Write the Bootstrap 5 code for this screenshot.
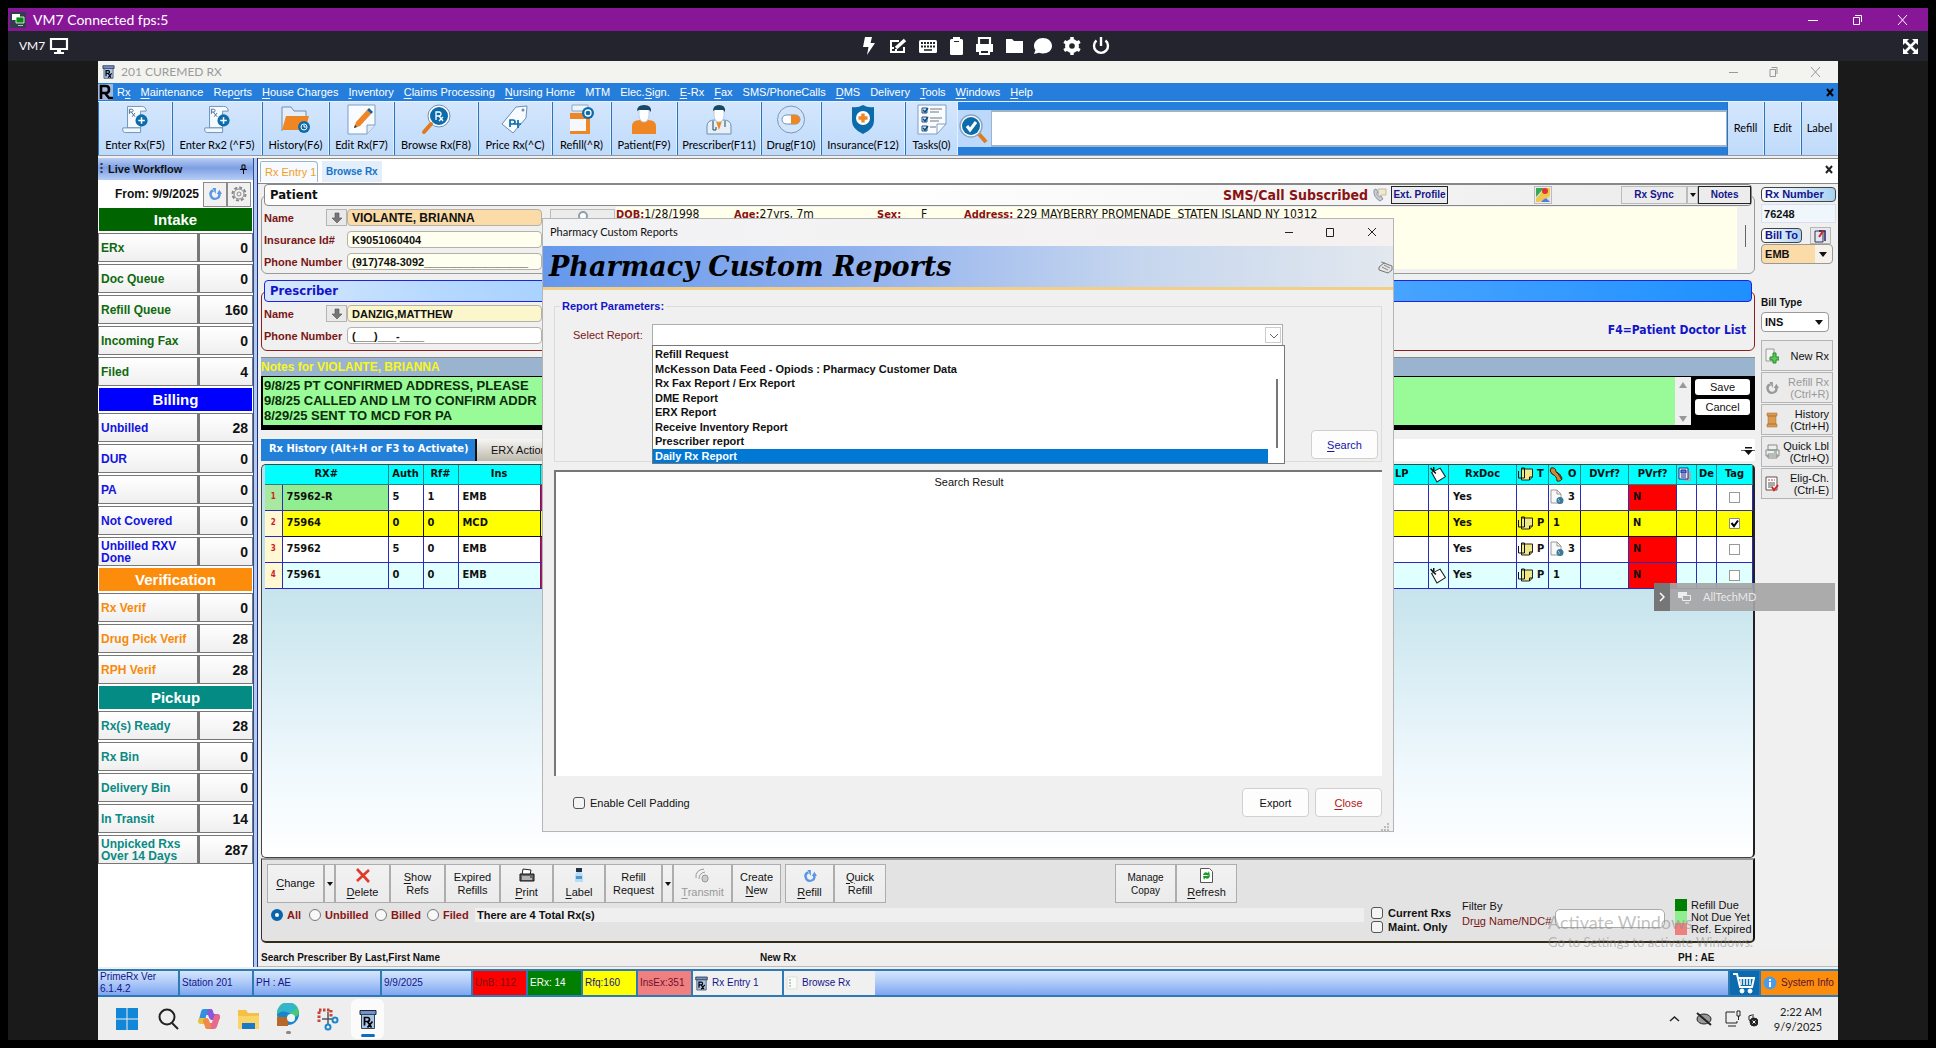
<!DOCTYPE html>
<html lang="en">
<head>
<meta charset="utf-8">
<meta name="viewport" content="width=device-width, initial-scale=1">
<title>VM7 Connected fps:5</title>
<link href="https://cdn.jsdelivr.net/npm/bootstrap@5.3.0/dist/css/bootstrap.min.css" rel="stylesheet">
<style>
:root{--ui:"Liberation Sans",Arial,sans-serif;--tah:"DejaVu Sans Condensed","DejaVu Sans",sans-serif;--seg:"Lato","Open Sans",sans-serif}
body{background:#000;padding:8px;min-height:100vh;display:flex;flex-direction:column;font:12px/14px var(--ui);color:#111;overflow-x:hidden}
button,input,select{font:inherit;color:inherit}
button{border:0;background:none;padding:0}
a{color:inherit;text-decoration:none}
a u,button u{text-underline-offset:2px}
svg{display:block;flex:none}
.shrink-ok{min-width:0}
.titlebar{height:23px;background:#881798;color:#fff;font:14px/20px var(--seg);padding:0 20px 0 2px}
.titlebar span{margin-left:7px}
.vmbar{height:30px;background:#24242f;color:#fff;font:12px/16px var(--seg);padding:0 9px 0 11px}
.vm-tools{padding-left:3px}
.stage{background:#1a1a1a;padding:0 90px}
.desktop{position:relative;background:#f0f0f0}
.app-title{height:22px;background:#f3f4f0;color:#9a9a9a;font:12px/20px var(--seg);padding:0 17px 0 3px}
.app-title span{margin-left:5px}
.menubar{height:19px;background:#257edb;color:#fff;font-size:11px;padding-right:4px;border-bottom:1px solid #e8f3ff}
.menubar nav{gap:10px}
.tools{height:54px;background:#257edb;border-bottom:1px solid #8f9aa6}
.tool{background:linear-gradient(#d4e6fd,#bfdbfb);border-left:1px solid #2b73bd;border-right:1px solid #e3f0ff;height:53px;padding:2px 0 3px;font:11px/14px var(--seg);display:flex;flex-direction:column;align-items:center;justify-content:space-between;color:#000;white-space:nowrap;overflow:hidden}
.w37{width:37px}.w49{width:49px}.w52{width:52px}.w53{width:53px}.w55{width:55px}.w57{width:57px}.w59{width:59px}.w60{width:60px}.w61{width:61px}.w65{width:65px}.w66{width:66px}.w67{width:67px}.w72{width:72px}.w74{width:74px}.w75{width:75px}.w84{width:84px}.w90{width:90px}
.find-ic{width:33px;height:37px;background:#bcd8fa}
.find-box{height:37px;border:2px solid #9fb4c8;border-width:2px 1px;background:#fff;border-radius:0}
.workspace{padding-top:2px}
/* workflow panel */
.flow{width:155px;flex:none;background:#fff}
.flow-head{height:22px;background:linear-gradient(#b9cdf3,#7d9fe4 45%,#b7cdf6);font-size:11px;font-weight:700;padding:0 6px 0 2px}
.flow-head span{margin-left:4px}
.flow-date{height:28px;font-weight:700;background:#fff;white-space:nowrap;padding-right:2px}
.sq{width:24px;height:25px;background:#f1f1f1;border:1px solid #8b8b8b;display:flex;align-items:center;justify-content:center}
.flow h2{font:bold 15px/23px var(--ui);color:#fff;height:23px;margin:0 1px 2px;text-align:center}
.flow .h-in{background:#006400}.flow .h-bi{background:#00f}.flow .h-ve{background:#fb8c0c}.flow .h-pi{background:#048b84}
.flow table{border-collapse:separate;border-spacing:0;width:100%}
.flow td{height:31px;padding:0 0 2px}
.flow td>a,.flow td>b{display:flex;align-items:center;height:29px;border:1px solid #777;background:linear-gradient(#fff,#efefef);line-height:12px;font-weight:700;padding:0 2px;white-space:nowrap}
.flow td>b{border-left-width:2px;justify-content:flex-end;font-size:14px;color:#111;padding-right:4px}
.flow td:last-child{width:55px}
.g{color:#0f6a0f}.bl{color:#1414e0}.or{color:#f88a0b}.te{color:#0b8a84}
.blue-ic{color:#5b96e8}
.split{width:5px;flex:none;background:linear-gradient(90deg,#2a4a9a 1px,#b4c9ee 1px 4px,#1b2f86 4px)}
/* document area */
.tabs{height:26px;background:#fff;border-top:1px solid #888;border-bottom:1px solid #888;font-size:11px;padding:2px 5px 0 2px}
.tabs a{height:21px;line-height:21px;padding:0 4px}
.tab-on{color:#f0a020;background:#f7faff;border:1px solid #9ab4cc;border-bottom:0;border-radius:2px 4px 0 0;width:58px}
.tab-off{color:#1672c8;background:#e2eefa;font-weight:700;font-size:10px}
.doc{padding-left:3px}
.grp-head{position:relative;z-index:1;height:22px;margin:0 3px;border:1px solid #888;border-radius:4px;background:linear-gradient(90deg,#fff,#fff 40%,#ebebeb);font:bold 13px/20px var(--tah);padding-left:5px}
.grp-body{height:79px;margin-top:-11px;border:1px solid #9a9a9a;border-radius:6px;padding:13px 0 0 2px}
.presc{margin-top:6px}
.presc .grp-body{height:60px;border-color:#8a2020}
.head-blue{border-color:#2222dd;background:linear-gradient(90deg,#d6e8fd,#b5d8ff 12%,#1e90ff);color:#1414c8}
.doclist{font:bold 12px/14px var(--tah);color:#1414c8;padding-top:4px}
.sms{color:#8a1212;font-size:14px}
.lab{width:62px;font-weight:700;font-size:11px;color:#7a1616;white-space:nowrap}
.lab-w{width:83px}
.arr{width:21px;height:17px;background:#e9e9e9;border:1px solid #b5b5b5;display:flex;align-items:center;justify-content:center}
.fld{height:17px;border:1px solid #b5b0a8;border-radius:4px;background:#ffffef;font-weight:700;font-size:11px;padding:0 4px;min-width:0}
.fld-pt{background:#fbdca8;font-size:12px}.fld-dr{background:#fcf6cc}
.pform{width:278px;flex:none;gap:5px}
.photo{width:65px;height:40px;margin-right:1px}
.info{background:#ffffec;font:12px/14px var(--tah);height:62px;margin-top:-2px;white-space:nowrap;min-width:0}
.info b{color:#8a1212;font-size:11px}
.i1{width:118px}.i2{width:143px}.i3{width:44px}.i4{width:43px}
.vscroll{width:17px}.vscroll span{width:1px;height:22px;background:#666}
.tbtn{height:18px;background:#ececec;border:1px solid #bbb;font:bold 10px/14px var(--ui);color:#14148c;white-space:nowrap}
.gap-ext{margin-right:86px}.gap-map{margin-right:69px}
.notes{margin-top:6px}
.notes-cap{height:19px;background:#9ab3cf;color:#f7f71c;font-weight:700;font-size:12px;line-height:18px;border-top:1px solid #888}
.notes-body{background:#000;height:54px;padding:1px 5px 0 2px}
.notes-txt{background:#98fb98;height:48px;font:bold 13px/15px var(--ui);color:#0b2b0b;padding:1px}
.nbtns{gap:4px;padding-top:2px}
.nbtn{height:16px;width:55px;background:#fff;border-radius:3px;font-size:11px;line-height:16px}
.grid-tabs{height:22px;margin-top:9px;font-size:11px;background:#fff;white-space:nowrap}
.gt-on{background:#2280d9;color:#fff;font:bold 11px/18px var(--tah);border-right:2px solid #111;width:216px;padding:0 0 3px 8px;text-align:left}
.gt-off{background:linear-gradient(#f6f6f4,#bdb9ad);width:120px;padding-left:14px;text-align:left}
.gridbox{margin-top:3px;padding-left:3px;border:1px solid #444;border-right:2px solid #222;border-radius:5px;background:linear-gradient(#b9dfe8,#c9e5ee 35%,#f0f9fd 78%,#fff)}
.rxt{width:100%;table-layout:fixed;border-collapse:collapse;font:bold 11px/14px var(--tah)}
.c17{width:17px}.c20{width:20px}.c32{width:32px}.c35{width:35px}.c36{width:36px}.c48{width:48px}.c50{width:50px}.c68{width:68px}.c82{width:82px}.c106{width:106px}.c8{width:8px}
.rxt th{background:#0ff;height:19px;text-align:center;border-right:1px solid #2a8080;border-bottom:1px solid #2a8080;padding:0}
.rxt td{height:26px;border:1px solid #2a2ac0;border-top:0;border-left:0;padding:0 0 0 4px;background:#fff;overflow:hidden;white-space:nowrap}
.rxt td.n{font-size:8px;color:#c22;text-align:center;padding:0;background:#fff8d2}
.rxt td.n1{background:#a8e8a0}
.rxt .y td:not(.n){background:#ff0;border-color:#111}
.rxt .c td:not(.n){background:#e0ffff}
.rxt tr td.r{background:#f00!important}
.rxt tr td.gr{background:#90ee90}
.rxt td.t{text-align:center;padding:0}
.ic{display:flex;align-items:center;gap:3px}
.ck{appearance:none;width:11px;height:11px;border:1px solid #999;background:#fff;margin:0 auto;display:block}
.act{background:#e3e3e3;border-top:2px solid #999;border-right:2px solid #111;border-bottom:2px solid #332d1c;border-left:1px solid #333;border-radius:0 0 5px 5px;height:85px;padding:4px 0 0 5px}
.ab{height:39px;background:linear-gradient(#f2f2f2,#ebebeb);border:1px solid #adadad;font-size:11px;line-height:13px;display:flex;flex-direction:column;align-items:center;justify-content:center;gap:3px;color:#111}
.ab:disabled,.sbtn:disabled{color:#999}
.copay{margin-left:229px;font-size:10px}
.dr{width:11px;padding:0}
.rad{appearance:none;width:12px;height:12px;border:1px solid #777;border-radius:50%;background:#f8f8f8;margin:0}
.rad:checked{border:4px solid #0a64ad;background:#fff}
.radios{height:18px;margin-top:3px}
.mar{color:#8a1616;font-weight:700;font-size:11px;margin-left:4px}
.m22{width:22px}.m50{width:50px}.m36{width:36px}.m32{width:32px}
.total{background:#efefef;font-size:11px;padding-left:2px}
.checks{width:98px;padding:3px 0 0 7px;font-size:11px}
.checks label{display:flex;align-items:center;height:14px;gap:5px;font-weight:700;white-space:nowrap}
.cbx{appearance:none;width:12px;height:12px;border:1px solid #555;border-radius:3px;background:#f4f4f4;margin:0}
.filt{width:93px;font-size:11px;line-height:15px;margin-top:-4px;white-space:nowrap}
.filt span,.selrep{color:#7a1616}
.ndc{width:110px;height:19px;margin-top:6px;border:1px solid #aaa;border-radius:5px;background:#fff}
.legend{margin:-4px 0 0 10px;width:78px;font-size:11px;line-height:12px;white-space:nowrap}
.legend i{width:12px;height:36px;background:linear-gradient(green 12px,#90ee90 12px 24px,#f08080 24px)}
.side{width:83px;flex:none;padding:3px 4px 0 6px}
.pill{border:1px solid #444;border-radius:4px;background:linear-gradient(90deg,#fff,#a9d2f2);color:#14148c;font:bold 11px/13px var(--ui);height:15px;padding:0 3px}
.rxnum{height:19px;border:1px solid #dde;background:#eff6fc;font-weight:700;font-size:11px;margin:2px 0 4px;padding:0 2px}
.billrow{height:17px}
.dd{position:relative}
.dd select{appearance:none;width:100%;border:1px solid #999;border-radius:4px;font-weight:700;font-size:11px;padding:0 3px;background:#fff;height:20px}
.dd #bt{background:linear-gradient(90deg,#fbdca8 53px,#f6f2ea 53px)}
.dd::after,.tri{content:"";border:4px solid transparent;border-top:5px solid #111;border-bottom:0}
.dd::after{position:absolute;right:6px;top:8px}
.tri{border-width:3px;border-top-width:4px;border-bottom:0;display:block}
.btype{display:block;font-weight:700;font-size:10px;margin:32px 0 2px}
.w68{width:68px}
.sbtn{height:31px;width:72px;background:#ebebeb;border:1px solid #b4b4b4;display:flex;align-items:center;justify-content:space-between;text-align:right;font-size:11px;line-height:12px;padding:0 3px;margin-bottom:1px;white-space:nowrap}
.stat{height:18px;margin-top:6px;background:#f1efee;font-weight:700;font-size:10px;border-bottom:1px solid #bbb;padding-left:3px}
.s1{width:499px}.s3{width:160px}
.foot{height:28px;margin-top:2px;background:linear-gradient(#d5e6fc,#b0cbf7 45%,#7ea6f2);border:1px solid #2f7ab4;border-width:2px 0;font-size:10px;line-height:12px;color:#14148c}
.foot>*{border-right:2px solid #2f7ab4;display:flex;align-items:center;padding-left:2px}
.f82{width:82px}.f128{width:128px}.f91{width:91px}
.s-red{background:red;color:#7c1010}.s-grn{background:green;color:#fff}.s-yel{background:#ff0}.s-cor{background:#f08080;color:#701030}
.win{background:#f0f0f0}.foot .win-off{border:0}
.cart{width:31px;background:#0c6aae}
.foot .sysinfo{width:77px;background:#fb8c0c;color:#5a1030;border-right:0}
.taskbar{height:43px;background:#eee;padding:0 16px 0 18px}
.ti{width:40px;height:40px;display:flex;align-items:center;justify-content:center}
.ti.t22{width:22px}.ti.t44{width:44px}.ti.t38{width:38px}
.ti.live{background:#fbfbfb;width:33px;gap:4px;margin-left:3px}
.clock{font:11px/15px var(--seg);color:#222}
/* report window */
.dlg{position:absolute;left:444px;top:157px;width:852px;height:614px;background:#f0f0f0;border:1px solid #b5b5b5;font-size:11px;z-index:5}
.dlg-title{height:27px;background:linear-gradient(90deg,#f2f3f5,#f5f1f1);font:11px/16px var(--seg);padding:0 16px 2px 7px}
.banner{height:44px;background:linear-gradient(90deg,#6598ec,#8fb0ee 35%,#c6d6ee 70%,#e2e8ee);border-bottom:3px solid #f0cf8a;font:italic bold 27px/38px "DejaVu Serif","Liberation Serif",serif;color:#000;padding:1px 0 0 6px}
.params{border:1px solid #dcdcdc;margin:9px 11px 0 11px;height:163px}
.params legend{font-size:11px;font-weight:700;color:#1414c8;float:none;width:auto;margin:-8px 0 0 5px;padding:0 2px;line-height:14px;background:#f0f0f0}
.selrow{margin-top:11px;padding-left:18px}
.selrep{width:79px}
.combo{width:631px;position:relative}
.combo select{appearance:none;width:100%;height:22px;border:1px solid #adadad;background:#fff;padding:0 4px;border-radius:0}
.chev{position:absolute;right:2px;top:3px;pointer-events:none;border:1px solid #ccc;background:#fff}
.lst{position:absolute;left:0;top:21px;width:633px;height:119px;border:1px solid #777;background:#fff;padding:1px 16px 0 0;margin:0;list-style:none;font-weight:700;z-index:2;display:flex;flex-direction:column;color:#111}
.lst li{flex:1 1 0;padding-left:2px;line-height:14px;white-space:nowrap}
.lst .sel{background:#0078d4;color:#fff}
.lst::after{content:"";position:absolute;right:6px;top:33px;width:2px;bottom:15px;background:#777}
.go{padding:84px 3px 0 0}
.wbtn{background:#fdfdfd;border:1px solid #d0d0d0;border-radius:4px;height:29px;width:67px}
.t-blue{color:#1414a8}.t-red{color:#b01818}
.result{margin:8px 11px 0;height:306px;background:#fff;border:2px solid #777;border-width:2px 0 0 2px;text-align:center;padding-top:3px}
.dlg-foot{padding:12px 11px 0 30px;gap:6px}
.dlg-foot label{gap:5px}
.alltech{position:absolute;right:3px;top:522px;width:181px;height:28px;background:rgba(165,165,165,.92);color:#e9e9e9;font:11px/14px var(--seg);z-index:6}
.alltech i{width:16px;height:28px;background:#767676}
.alltech span{margin-left:11px}
.wm{position:absolute;left:1450px;top:849px;color:rgba(140,140,140,.55);font:18px/24px var(--seg);z-index:6;white-space:nowrap;pointer-events:none}
.wm small{display:block;font-size:13px;line-height:16px}
</style>
<script src="https://cdn.jsdelivr.net/npm/bootstrap@5.3.0/dist/js/bootstrap.bundle.min.js"></script>
</head>
<body>
<svg width="0" height="0" class="position-absolute" aria-hidden="true">
<defs>
<symbol id="rx" viewBox="0 0 18 20"><path d="M1 1h16v4H1z" fill="#6f93c6" stroke="#223" /><path d="M2.500 5h13v14h-13z" fill="#a9c3ea" stroke="#345"/><path d="M5.500 16V8h3q2 0 2 2t-2 2h-3m3 0 4 6m1-6-5 6" fill="none" stroke="#000" stroke-width="1.700"/></symbol>
<symbol id="scroll" viewBox="0 0 30 32"><path d="M7 2h15q5 0 5 5h-6v18H7z" fill="#f5faff" stroke="#6b8fb3"/><path d="M2 25h19v5H5q-4 0-3-5z" fill="#eef6ff" stroke="#6b8fb3"/><path d="M9 10V5h2q2 0 2 1.500T11 8H9m2 0 4 5m0-4-3 4" fill="none" stroke="#446a94"/><circle cx="22" cy="17" r="6.500" fill="#0c6cab"/><path d="M22 13.500v7M18.500 17h7" stroke="#fff" stroke-width="1.600"/></symbol>
<symbol id="swirl" viewBox="0 0 16 16"><path d="M5 2.500A6.500 6.500 0 1 0 14.500 8h-3A3.600 3.600 0 1 1 7 5.200z" fill="currentColor"/><path d="M5 1h4v7zM10 8l3-5 3 5z" fill="currentColor"/></symbol>
<symbol id="down" viewBox="0 0 12 12"><path d="M4 1h4v5h3L6 11 1 6h3z" fill="#777" stroke="#555" stroke-width=".600"/></symbol>
<symbol id="clip" viewBox="0 0 16 16"><path d="M4 3h11v8l-3 3H4z" fill="#f0e888" stroke="#222"/><path d="M12 14v-3h3M1 5v7h6V2H4v8" fill="none" stroke="#111"/></symbol>
<symbol id="tagi" viewBox="0 0 16 16"><path d="m2 6 8-4 5 8-8 5z" fill="#fff" stroke="#222"/><path d="M1 2l5 5M4 1v3" stroke="#111" stroke-width="1.400"/></symbol>
<symbol id="doc" viewBox="0 0 16 16"><path d="M2 1h6l4 4v9H2z" fill="#f8f8f8" stroke="#999"/><path d="M8 1v4h4" fill="none" stroke="#999"/><circle cx="11" cy="11.500" r="3.500" fill="#3d7a99"/><path d="M9 10q2 1 1 3" stroke="#9cd0c0" fill="none"/></symbol>
</defs></svg>

<header class="titlebar d-flex align-items-center">
<svg width="16" height="16" viewBox="0 0 16 16"><path d="M0 0h16v16H0z" fill="#333e4c"/><path d="M2 2h8v6H2z" fill="#fff"/><path d="M6 5h8v6H6z" fill="#078a15" stroke="#fff" stroke-width=".800"/><path d="M8 13.500h5" stroke="#bbb"/></svg>
<span class="flex-fill">VM7 Connected fps:5</span>
<svg width="100" height="12" viewBox="0 0 100 12" fill="none" stroke="#fff"><path d="M0 6.500h10M45.500 3.500h6v7h-6zM47 1.500h6.500V8M90 1l9 10M99 1 90 11"/></svg>
</header>
<div class="vmbar d-flex align-items-center">
<span>VM7</span>
<svg class="ms-1" width="20" height="18" viewBox="0 0 20 18"><path d="M2 2h16v10H2z" fill="none" stroke="#fff" stroke-width="2.200"/><path d="M8 13h4v2h3v2H5v-2h3z" fill="#fff"/></svg>
<div class="vm-tools flex-fill d-flex justify-content-center" aria-label="Session tools">
<svg width="252" height="20" viewBox="0 0 252 20" fill="#fff"><path d="M4 1h7L9.500 7H14L6 19l1.500-8H2z"/><g fill="none" stroke="#fff" stroke-width="2"><path d="M38 5h-8v11h13v-5"/><path d="m35 12 9-8" stroke-width="3.500"/></g><path d="M31 11h2v2h-2zM34 13h2v2h-2z"/><rect x="58" y="4" width="18" height="13" rx="1.500"/><path d="M60 7h14M60 10.500h14" stroke="#24242f" stroke-width="2" stroke-dasharray="2 1"/><path d="M63 14h8" stroke="#24242f" stroke-width="1.600"/><rect x="89" y="3" width="13" height="16" rx="1.500"/><path d="M92 1h7v4h-7z"/><path d="M93 5.500h5" stroke="#24242f"/><path d="M118 8V2h11v6" fill="none" stroke="#fff" stroke-width="2.200"/><path d="M115 8h17v8h-3v-3h-11v3h-3z"/><path d="M119 14h9v4h-9z" fill="none" stroke="#fff" stroke-width="2"/><path d="M145 3h6l2 2h9v12h-17z"/><path d="M182 2c5 0 9 3.500 9 8s-4 7.500-9 7.500c-1.500 0-2.500-.3-4-.8L173 18l1.500-4c-1-1-1.500-2.500-1.500-4 0-4.500 4-8 9-8z"/><circle cx="211" cy="10" r="5" fill="none" stroke="#fff" stroke-width="4"/><path d="M211 1v18M203.200 5.500l15.600 9M203.200 14.500l15.600-9" stroke="#fff" stroke-width="3.500"/><circle cx="211" cy="10" r="2.800" fill="#24242f"/><path d="M235.500 4.500a7 7 0 1 0 9 0M240 1v9" fill="none" stroke="#fff" stroke-width="2.400"/></svg>
</div>
<svg width="17" height="17" viewBox="0 0 17 17"><path d="M1 1h6L1 7zM10 1h6v6zM1 10v6h6zM16 10v6h-6z" fill="#fff"/><path d="m3 3 11 11M14 3 3 14" stroke="#fff" stroke-width="2.600"/></svg>
</div>

<main class="stage flex-fill d-flex">
<div class="desktop flex-fill d-flex flex-column shrink-ok">
<div class="app-title d-flex align-items-center">
<svg width="15" height="14"><use href="#rx"/></svg><span class="flex-fill">201 CUREMED RX</span>
<svg width="92" height="12" viewBox="0 0 92 12" fill="none" stroke="#999"><path d="M0 6.500h9M41 3.500h5.500v7H41zM42.500 1.500H48V8M82 1l9 10M91 1 82 11"/></svg>
</div>
<div class="menubar d-flex align-items-center">
<svg width="15" height="16" viewBox="0 0 15 16" class="me-1"><path d="M0 0h15v16H0z" fill="#9fb8e0"/><path d="M3 15V2h5q3 0 3 3.500T8 9H4m3 0 4 5h4" fill="none" stroke="#000" stroke-width="2.600"/></svg>
<nav class="d-flex flex-fill" aria-label="Main menu"><a href="#">R<u>x</u></a><a href="#"><u>M</u>aintenance</a><a href="#">Rep<u>o</u>rts</a><a href="#"><u>H</u>ouse Charges</a><a href="#"><u>I</u>nventory</a><a href="#"><u>C</u>laims Processing</a><a href="#"><u>N</u>ursing Home</a><a href="#">MTM</a><a href="#">Elec.<u>S</u>ign.</a><a href="#"><u>E</u>-Rx</a><a href="#"><u>F</u>ax</a><a href="#">SMS/PhoneCalls</a><a href="#"><u>D</u>MS</a><a href="#">Delivery</a><a href="#"><u>T</u>ools</a><a href="#"><u>W</u>indows</a><a href="#"><u>H</u>elp</a></nav>
<button aria-label="Close document"><svg width="8" height="9"><path d="m1 1 6 7M7 1 1 8" stroke="#000" stroke-width="2"/></svg></button>
</div>
<div class="tools d-flex align-items-start">
<button class="tool w74"><svg width="28" height="31"><use href="#scroll"/></svg>Enter Rx(F5)</button>
<button class="tool w90"><svg width="28" height="31"><use href="#scroll"/></svg>Enter Rx2 (^F5)</button>
<button class="tool w67"><svg width="30" height="31" viewBox="0 0 30 31"><path d="M1 27V3h9l3 4h12v8" fill="#e3eefa" stroke="#6b8fb3"/><path d="M5 12h23l-4 14H1z" fill="#ee8623"/><circle cx="23" cy="23" r="6" fill="#0c6cab"/><circle cx="23" cy="23" r="3" fill="none" stroke="#fff"/><path d="M23 21v2h2" stroke="#fff" fill="none"/></svg>History(F6)</button>
<button class="tool w65"><svg width="30" height="31" viewBox="0 0 30 31"><path d="M1 1h27v20l-8 9H1z" fill="#f8fbff" stroke="#7f9fc0"/><path d="M28 21h-8v9" fill="#dde9f6" stroke="#7f9fc0"/><path d="m7 24 2-6L20 6l4 4-11 12z" fill="#ee8623"/><path d="m20 6 2-2 4 4-2 2z" fill="#1d5f93"/><path d="m7 24 1-3 2 2z" fill="#333"/></svg>Edit Rx(F7)</button>
<button class="tool w84"><svg width="30" height="31" viewBox="0 0 30 31"><circle cx="18" cy="12" r="10" fill="#0c6cab" stroke="#fff" stroke-width="2"/><circle cx="18" cy="12" r="11" fill="none" stroke="#6b8fb3"/><path d="m10 20-7 8" stroke="#e07a20" stroke-width="4" stroke-linecap="round"/><path d="M15 16V8h3q2 0 2 2t-2 2h-3m3 0 4 5m0-4-4 4" fill="none" stroke="#fff" stroke-width="1.300"/></svg>Browse Rx(F8)</button>
<button class="tool w74"><svg width="28" height="31" viewBox="0 0 28 31"><path d="M1 20 15 3l11-1-1 12-13 15z" fill="#f8fbff" stroke="#6b8fb3"/><circle cx="22" cy="6" r="1.500" fill="#6b8fb3"/><path d="M9 23v-7h3q2 0 2 2t-2 2H9m8-4v8m-3-4h6" fill="none" stroke="#0c6cab" stroke-width="1.700"/></svg>Price Rx(^C)</button>
<button class="tool w59"><svg width="26" height="31" viewBox="0 0 26 31"><path d="M3 1h16v6H3z" fill="#eef5fd" stroke="#8aa8c6"/><path d="M1 9h20v21H1z" fill="#ee8623"/><path d="M1 15h16v12H1z" fill="#f5f9ff"/><circle cx="19" cy="9" r="6" fill="#0c6cab"/><circle cx="19" cy="9" r="3" fill="none" stroke="#fff" stroke-width="1.300"/></svg>Refill(^R)</button>
<button class="tool w66"><svg width="28" height="31" viewBox="0 0 28 31"><path d="M2 30v-8q0-6 8-6h8q8 0 8 6v8z" fill="#ee8623"/><path d="M9 4h10v8q-1 6-5 6t-5-6z" fill="#fff" stroke="#bcd"/><path d="M7 7q0-6 7-6 8 0 7 7L19 6H9z" fill="#174866"/></svg>Patient(F9)</button>
<button class="tool w84"><svg width="28" height="31" viewBox="0 0 28 31"><path d="M2 30v-8q0-6 8-6h8q8 0 8 6v8z" fill="#e9eff6" stroke="#6b8fb3"/><path d="m11 17 3 9 3-9z" fill="#ee8623"/><path d="M8 17v9h3v-3M20 17v6" fill="none" stroke="#174866"/><path d="M9 4h10v8q-1 6-5 6t-5-6z" fill="#fff" stroke="#bcd"/><path d="M8 7q0-6 6-6 7 0 6 7L18 6h-8z" fill="#174866"/></svg>Prescriber(F11)</button>
<button class="tool w60"><svg width="30" height="31" viewBox="0 0 30 31"><circle cx="15" cy="15.500" r="13.500" fill="#d3e5fb" stroke="#7d96b8"/><rect x="6" y="11" width="18" height="9" rx="4.500" fill="#fff" stroke="#6b8fb3"/><path d="M15 11h4.500a4.500 4.500 0 0 1 0 9H15z" fill="#ee8623"/></svg>Drug(F10)</button>
<button class="tool w84"><svg width="26" height="31" viewBox="0 0 26 31"><path d="M13 1q5 3 11 2v14q0 8-11 13Q2 25 2 17V3q6 1 11-2z" fill="#0c6cab"/><circle cx="13" cy="14" r="7" fill="#fff"/><path d="M13 9.500v9M8.500 14h9" stroke="#ee8623" stroke-width="3.400"/></svg>Insurance(F12)</button>
<button class="tool w53"><svg width="30" height="31" viewBox="0 0 30 31"><path d="M1 1h28v19l-9 10H1z" fill="#f8fbff" stroke="#7f9fc0"/><path d="M29 20h-9v10" fill="none" stroke="#7f9fc0"/><path d="M5 4h5v5H5zM5 13h5v5H5zM5 22h5v5H5z" fill="#dceafa" stroke="#22507f"/><path d="m6 6 2 2 3-4M6 15l2 2 3-4M6 24l2 2 3-4" fill="none" stroke="#0c4c80" stroke-width="1.500"/><path d="M13 5h12M13 8h9M13 14h12M13 17h9M13 23h6" stroke="#777"/></svg>Tasks(0)</button>
<label class="find-ic d-flex align-items-center mt-2" for="find"><svg width="31" height="33" viewBox="0 0 31 33"><path d="m20 21 8 9" stroke="#e07a20" stroke-width="4"/><circle cx="13" cy="14" r="11" fill="#fff" stroke="#8aa8c6" stroke-width="1.500"/><circle cx="13" cy="14" r="9" fill="#0c6cab"/><path d="m9 14 3 4 6-8" fill="none" stroke="#fff" stroke-width="3"/></svg></label>
<input id="find" class="find-box flex-fill mt-2 shrink-ok" aria-label="Find">
<button class="tool w37 justify-content-center">Refill</button><button class="tool w37 justify-content-center">Edit</button><button class="tool w37 justify-content-center">Label</button>
</div>

<div class="workspace flex-fill d-flex">
<aside class="flow">
<div class="flow-head d-flex align-items-center"><svg width="4" height="12"><path d="M1.500 0v12" stroke="#334" stroke-width="2" stroke-dasharray="2 2"/></svg><span class="flex-fill">Live Workflow</span><svg width="7" height="10"><path d="M2 1h3v4H2zM0 5.500h7M3.500 6v4" fill="none" stroke="#000"/></svg></div>
<div class="flow-date d-flex align-items-center justify-content-end"><span class="me-1">From: 9/9/2025</span><button class="sq blue-ic" aria-label="Reload"><svg width="14" height="14"><use href="#swirl"/></svg></button><button class="sq" aria-label="Settings"><svg width="16" height="16" viewBox="0 0 16 16" fill="none" stroke="#888"><circle cx="8" cy="8" r="6.500" stroke-width="2" stroke-dasharray="3 2"/><circle cx="8" cy="8" r="5"/><circle cx="8" cy="8" r="2"/></svg></button></div>
<section class="g"><h2 class="h-in">Intake</h2><table><tr><td><a href="#">ERx</a></td><td><b>0</b></td></tr><tr><td><a href="#">Doc Queue</a></td><td><b>0</b></td></tr><tr><td><a href="#">Refill Queue</a></td><td><b>160</b></td></tr><tr><td><a href="#">Incoming Fax</a></td><td><b>0</b></td></tr><tr><td><a href="#">Filed</a></td><td><b>4</b></td></tr></table></section>
<section class="bl"><h2 class="h-bi">Billing</h2><table><tr><td><a href="#">Unbilled</a></td><td><b>28</b></td></tr><tr><td><a href="#">DUR</a></td><td><b>0</b></td></tr><tr><td><a href="#">PA</a></td><td><b>0</b></td></tr><tr><td><a href="#">Not Covered</a></td><td><b>0</b></td></tr><tr><td><a href="#">Unbilled RXV<br>Done</a></td><td><b>0</b></td></tr></table></section>
<section class="or"><h2 class="h-ve">Verification</h2><table><tr><td><a href="#">Rx Verif</a></td><td><b>0</b></td></tr><tr><td><a href="#">Drug Pick Verif</a></td><td><b>28</b></td></tr><tr><td><a href="#">RPH Verif</a></td><td><b>28</b></td></tr></table></section>
<section class="te"><h2 class="h-pi">Pickup</h2><table><tr><td><a href="#">Rx(s) Ready</a></td><td><b>28</b></td></tr><tr><td><a href="#">Rx Bin</a></td><td><b>0</b></td></tr><tr><td><a href="#">Delivery Bin</a></td><td><b>0</b></td></tr><tr><td><a href="#">In Transit</a></td><td><b>14</b></td></tr><tr><td><a href="#">Unpicked Rxs<br>Over 14 Days</a></td><td><b>287</b></td></tr></table></section>
</aside>
<div class="split"></div>
<div class="flex-fill d-flex flex-column shrink-ok">
<div class="tabs d-flex align-items-start"><a href="#" class="tab-on text-nowrap">Rx Entry 1</a><a href="#" class="tab-off ms-1">Browse Rx</a><button class="ms-auto mt-1" aria-label="Close tab"><svg width="8" height="9"><path d="m1 1 6 7M7 1 1 8" stroke="#222" stroke-width="2"/></svg></button></div>
<div class="flex-fill d-flex">
<div class="doc flex-fill d-flex flex-column shrink-ok">

<section>
<div class="grp-head d-flex align-items-center"><span class="flex-fill">Patient</span>
<span class="sms">SMS/Call Subscribed</span><svg class="mx-1" width="15" height="14" viewBox="0 0 15 14"><path d="M2 2q-1 7 6 11l3-2-2-3-2 1Q4 6 5 5l1-1-2-3z" fill="#c8ccd4" stroke="#8895a8"/><path d="M6 1h8v6H9L7 9z" fill="#f3e9c0" stroke="#bbb"/></svg>
<button class="tbtn w57 border-dark gap-ext">Ext. Profile</button>
<button class="tbtn gap-map" aria-label="Map"><svg width="16" height="16" viewBox="0 0 16 16"><path d="M1 1h14v14H1z" fill="#ddd"/><path d="M1 1h8L1 10z" fill="#3ba854"/><path d="M15 15H6l4-5z" fill="#4a7fe0"/><path d="M15 1v8L4 15H1v-3L10 1z" fill="#f2c64a"/><circle cx="10" cy="4" r="3" fill="#d33"/></svg></button>
<button class="tbtn w66">Rx Sync</button><button class="tbtn dr d-flex align-items-center justify-content-center" aria-label="Rx Sync menu"><span class="tri"></span></button><button class="tbtn w53 border-dark">Notes</button></div>
<div class="grp-body d-flex">
<div class="pform d-flex flex-column">
<div class="d-flex align-items-center"><label class="lab" for="pn">Name</label><button class="arr" aria-label="Patient lookup"><svg width="12" height="12"><use href="#down"/></svg></button><input id="pn" class="fld fld-pt flex-fill" value="VIOLANTE, BRIANNA"></div>
<div class="d-flex align-items-center"><label class="lab lab-w" for="ins">Insurance Id#</label><input id="ins" class="fld flex-fill" value="K9051060404"></div>
<div class="d-flex align-items-center"><label class="lab lab-w" for="ph">Phone Number</label><input id="ph" class="fld flex-fill" value="(917)748-3092_________________"></div>
</div>
<button class="tbtn photo ms-2" aria-label="Photo"><svg class="mx-auto" width="12" height="28"><circle cx="6" cy="6" r="4" fill="#fff" stroke="#8ba0aa" stroke-width="2"/></svg></button>
<div class="info flex-fill d-flex"><span class="i1"><b>DOB:</b>1/28/1998</span><span class="i2"><b>Age:</b>27yrs, 7m</span><span class="i3"><b>Sex:</b></span><span class="i4">F</span><span><b>Address:</b> 229 MAYBERRY PROMENADE &nbsp;STATEN ISLAND NY 10312</span></div>
<div class="vscroll d-flex justify-content-center pt-3"><span></span></div>
</div>
</section>

<section class="presc">
<div class="grp-head head-blue">Prescriber</div>
<div class="grp-body d-flex">
<div class="pform d-flex flex-column">
<div class="d-flex align-items-center"><label class="lab" for="dn">Name</label><button class="arr" aria-label="Prescriber lookup"><svg width="12" height="12"><use href="#down"/></svg></button><input id="dn" class="fld fld-dr flex-fill" value="DANZIG,MATTHEW"></div>
<div class="d-flex align-items-center"><label class="lab lab-w" for="dp">Phone Number</label><input id="dp" class="fld flex-fill bg-white" value="(___)___-____"></div>
</div>
<span class="doclist ms-auto me-2 align-self-center">F4=Patient Doctor List</span>
</div>
</section>

<section class="notes">
<div class="notes-cap">Notes for VIOLANTE, BRIANNA</div>
<div class="notes-body d-flex">
<div class="notes-txt flex-fill">9/8/25 PT CONFIRMED ADDRESS, PLEASE<br>9/8/25 CALLED AND LM TO CONFIRM ADDR<br>8/29/25 SENT TO MCD FOR PA</div>
<svg width="16" height="48" class="me-1"><path d="M0 0h16v48H0z" fill="#f0f0f0"/><path d="M4 11h8l-4-6zM4 39h8l-4 6z" fill="#999"/></svg>
<div class="nbtns d-flex flex-column"><button class="nbtn">Save</button><button class="nbtn">Cancel</button></div>
</div>
</section>

<div class="grid-tabs d-flex"><button class="gt-on">Rx History (Alt+H or F3 to Activate)</button><button class="gt-off">ERX Action</button><svg class="ms-auto align-self-center" width="14" height="12"><path d="M0 6.500h14" stroke="#666"/><path d="M4 3h7v1.500H4zM3 6h9L7.500 11z" fill="#111"/></svg></div>

<div class="gridbox flex-fill">
<table class="rxt">
<colgroup><col class="c17"><col class="c106"><col class="c35"><col class="c35"><col class="c82"><col class="c8"><col><col class="c50"><col class="c20"><col class="c68"><col class="c32"><col class="c32"><col class="c48"><col class="c48"><col class="c20"><col class="c20"><col class="c36"></colgroup>
<thead><tr><th colspan="2">RX#</th><th>Auth</th><th>Rf#</th><th>Ins</th><th></th><th></th><th class="text-start ps-3">LP</th><th><svg width="18" height="17"><use href="#tagi"/></svg></th><th>RxDoc</th><th><span class="ic"><svg width="17" height="16"><use href="#clip"/></svg>T</span></th><th><span class="ic"><svg width="16" height="15" viewBox="0 0 16 15"><path d="M2 1q5-1 5 4 4 1 6 6-1 4-5 3Q8 9 3 7 0 4 2 1z" fill="#c98a3a" stroke="#3a220c"/><path d="m8 5 5 8" stroke="#3a220c"/></svg>O</span></th><th>DVrf?</th><th>PVrf?</th><th><svg width="16" height="15" viewBox="0 0 16 15"><path d="M6 4h8v10H6z" fill="#aaa"/><path d="M2 1h9v11H2z" fill="#e8eefc" stroke="#222f88"/><path d="M4 3h5v3H4zM4 8h5M4 10h5" stroke="#222f88" fill="#5a74d8"/></svg></th><th>De</th><th>Tag</th></tr></thead>
<tbody>
<tr><td class="n n1">1</td><td class="gr">75962-R</td><td>5</td><td>1</td><td>EMB</td><td class="r"></td><td></td><td></td><td></td><td>Yes</td><td></td><td class="p-0"><span class="ic"><svg width="16" height="16"><use href="#doc"/></svg>3</span></td><td></td><td class="r">N</td><td></td><td></td><td class="t"><input type="checkbox" class="ck" aria-label="Tag 75962-R"></td></tr>
<tr class="y"><td class="n">2</td><td>75964</td><td>0</td><td>0</td><td>MCD</td><td></td><td></td><td></td><td></td><td>Yes</td><td class="p-0"><span class="ic"><svg width="17" height="16"><use href="#clip"/></svg>P</span></td><td>1</td><td></td><td>N</td><td></td><td></td><td class="t"><label class="d-block"><input type="checkbox" class="visually-hidden" checked aria-label="Tag 75964"><svg class="mx-auto" width="11" height="11"><path d="M.5.5h10v10H.5z" fill="#fff" stroke="#888"/><path d="m2.500 5 2.500 3 4-5.500" fill="none" stroke="#000" stroke-width="2"/></svg></label></td></tr>
<tr><td class="n">3</td><td>75962</td><td>5</td><td>0</td><td>EMB</td><td class="r"></td><td></td><td></td><td></td><td>Yes</td><td class="p-0"><span class="ic"><svg width="17" height="16"><use href="#clip"/></svg>P</span></td><td class="p-0"><span class="ic"><svg width="16" height="16"><use href="#doc"/></svg>3</span></td><td></td><td class="r">N</td><td></td><td></td><td class="t"><input type="checkbox" class="ck" aria-label="Tag 75962"></td></tr>
<tr class="c"><td class="n">4</td><td>75961</td><td>0</td><td>0</td><td>EMB</td><td class="r"></td><td></td><td></td><td class="p-0"><svg width="18" height="17"><use href="#tagi"/></svg></td><td>Yes</td><td class="p-0"><span class="ic"><svg width="17" height="16"><use href="#clip"/></svg>P</span></td><td>1</td><td></td><td class="r">N</td><td></td><td></td><td class="t"><input type="checkbox" class="ck" aria-label="Tag 75961"></td></tr>
</tbody></table>
</div>

<section class="act d-flex flex-column">
<div class="d-flex">
<button class="ab w57"><span><u>C</u>hange</span></button><button class="ab dr" aria-label="Change menu"><span class="tri"></span></button>
<button class="ab w55"><svg width="16" height="15"><path d="m2 1 12 13M14 2 2 13" stroke="#e0392c" stroke-width="2.600"/></svg><span><u>D</u>elete</span></button>
<button class="ab w55"><span><u>S</u>how<br>Refs</span></button><button class="ab w55">Expired<br>Refills</button>
<button class="ab w53"><svg width="16" height="15" viewBox="0 0 16 15"><path d="m4 1 8 1-1 5H3z" fill="#fff" stroke="#222"/><path d="M1 6h14v7H1z" fill="#666" stroke="#111"/><path d="M3 9h8M3 11h10" stroke="#fff"/></svg><span><u>P</u>rint</span></button>
<button class="ab w52"><svg width="12" height="15" viewBox="0 0 12 15"><path d="M3 0h6v4H3z" fill="#1f3448"/><path d="M4 4h4l2 3v7H2V7z" fill="#b8dcf4"/><path d="M3 8h6v3H3z" fill="#4e97d0"/></svg><span><u>L</u>abel</span></button>
<button class="ab w57">Refill<br>Request</button><button class="ab dr" aria-label="Refill request menu"><span class="tri"></span></button>
<button class="ab w59" disabled><svg width="16" height="15" fill="none" stroke="#999"><path d="M1 10Q0 2 9 1M4 11q0-6 6-7"/><rect x="7" y="7" width="6" height="7" rx="3" fill="#ccc"/></svg><span><u>T</u>ransmit</span></button>
<button class="ab w49"><span>Create<br><u>N</u>ew</span></button>
<button class="ab w49 ms-1"><svg class="blue-ic" width="14" height="14"><use href="#swirl"/></svg><span><u>R</u>efill</span></button>
<button class="ab w52"><span><u>Q</u>uick<br>Refill</span></button>
<button class="ab w61 copay">Manage<br>Copay</button>
<button class="ab w61"><svg width="13" height="15"><path d="M.5.5h9l3 3v11H.5z" fill="#fff" stroke="#555"/><path d="M3 7q1-4 5-2l1-2 1 5-4-1M10 8q-1 4-5 2l-1 2-1-4h4" fill="#1b9b2a"/></svg><span><u>R</u>efresh</span></button>
</div>
<div class="d-flex align-items-start">
<div class="radios d-flex align-items-center flex-fill"><input type="radio" name="f" id="r1" class="rad ms-1" checked><label class="mar m22" for="r1">All</label><input type="radio" name="f" id="r2" class="rad"><label class="mar m50" for="r2">Unbilled</label><input type="radio" name="f" id="r3" class="rad"><label class="mar m36" for="r3">Billed</label><input type="radio" name="f" id="r4" class="rad"><label class="mar m32" for="r4">Filed</label><b class="total flex-fill">There are 4 Total Rx(s)</b></div>
<div class="checks"><label><input type="checkbox" class="cbx">Current Rxs</label><label><input type="checkbox" class="cbx">Maint. Only</label></div>
<label for="ndc" class="filt">Filter By<br><span>Dr<u>u</u>g Name/NDC#</span></label>
<input id="ndc" class="ndc">
<div class="legend d-flex"><i></i><span class="ms-1">Refill Due<br>Not Due Yet<br>Ref. Expired</span></div>
</div>
</section>
</div>

<aside class="side">
<div class="pill w75">Rx Number</div>
<input aria-label="Rx number" value="76248" class="rxnum w75">
<div class="billrow d-flex align-items-center"><label for="bt" class="pill">Bill To</label><button class="arr ms-2" aria-label="Bill to details"><svg width="14" height="14"><path d="M2 2h8v11H2z" fill="#dfe8f2" stroke="#335"/><path d="M6 2h6v10" fill="none" stroke="#226" stroke-width="1.500"/><path d="m6 8 4-6" stroke="#d22" stroke-width="2"/></svg></button></div>
<div class="dd w72"><select id="bt"><option>EMB</option></select></div>
<label for="bty" class="btype">Bill Type</label>
<div class="dd w68 mb-2"><select id="bty"><option>INS</option></select></div>
<button class="sbtn"><svg width="14" height="16" viewBox="0 0 14 16"><path d="M1 1h8v12H1z" fill="#f4f4f4" stroke="#999"/><path d="M8 5h3v4h3v3h-3v3H8v-3H5V9h3z" fill="#58c858" stroke="#2a8a2a"/></svg>New Rx</button>
<button class="sbtn" disabled><svg width="14" height="14"><use href="#swirl"/></svg>Refill Rx<br>(Ctrl+R)</button>
<button class="sbtn"><svg width="14" height="16"><path d="M2 1h10v3H2zM3 4h8v8H3zM2 12h10v3H2z" fill="#d99a52" stroke="#a8692a" stroke-width=".500"/></svg>History<br>(Ctrl+H)</button>
<button class="sbtn"><svg width="15" height="15" fill="#eee" stroke="#888"><path d="M3 1h9v5H3zM1 6h13v6H1zM3 10h9v4H3z"/><path d="M9 8h3" stroke="#3a3"/></svg>Quick Lbl<br>(Ctrl+Q)</button>
<button class="sbtn"><svg width="14" height="16"><path d="M1 1h11v13H1z" fill="#fff" stroke="#555"/><path d="M3 4h7" stroke="#d33" stroke-dasharray="2 1"/><path d="M3 7h7M3 9h7M3 11h5" stroke="#555"/><path d="m7 11 2 3 4-5" fill="none" stroke="#d22" stroke-width="2"/></svg>Elig-Ch.<br>(Ctrl-E)</button>
</aside>
</div>
<div class="stat d-flex align-items-center"><span class="s1">Search Prescriber By Last,First Name</span><span class="flex-fill">New Rx</span><span class="s3">PH : AE</span></div>
</div>
</div>

<footer class="foot d-flex">
<span class="f82">PrimeRx Ver<br>6.1.4.2</span><span class="w74">Station 201</span><span class="f128">PH : AE</span><span class="f91">9/9/2025</span><span class="w55 s-red">UnB: 112</span><span class="w55 s-grn">ERx: 14</span><span class="w55 s-yel">Rfq:160</span><span class="w55 s-cor">InsEx:351</span>
<button class="f91 win"><svg width="13" height="15" class="me-1"><use href="#rx"/></svg>Rx Entry 1</button><button class="f91 win win-off"><svg width="12" height="14" class="me-1"><path d="M1 1h10v12H1z" fill="#fafafa" stroke="#ddd"/><path d="M3 4h2M3 7h2M3 10h2" stroke="#7a7"/></svg>Browse Rx</button>
<span class="flex-fill"></span><button aria-label="Cart" class="cart"><svg width="24" height="22" viewBox="0 0 24 22" fill="none" stroke="#fff"><path d="M1 2h4l3 13h12l2-9H6" stroke-width="2"/><path d="M9 7v6M12 7v6M15 7v6M18 7v6" stroke-width="1.500"/><circle cx="10" cy="19" r="2" fill="#fff"/><circle cx="18" cy="19" r="2" fill="#fff"/></svg></button><button class="sysinfo"><svg width="14" height="14" class="me-1"><circle cx="7" cy="7" r="6.500" fill="#4a9be8"/><path d="M7 3v2M7 6v5" stroke="#fff" stroke-width="2"/></svg>System Info</button>
</footer>

<div class="taskbar d-flex align-items-center">
<div class="d-flex">
<button class="ti t22" aria-label="Start"><svg width="22" height="22"><path d="M0 0h10.500v10.500H0zM11.500 0H22v10.500H11.500zM0 11.500h10.500V22H0zM11.500 11.500H22V22H11.500z" fill="#1287d8"/></svg></button>
<button class="ti t44 ms-2" aria-label="Search"><svg width="22" height="22" fill="none" stroke="#222" stroke-width="2"><circle cx="10" cy="9" r="7.500"/><path d="m15 15 6 6"/></svg></button>
<button class="ti t38" aria-label="Copilot"><svg width="24" height="22" viewBox="0 0 24 22" fill="none" stroke-width="6" stroke-linecap="round" stroke-linejoin="round"><path d="m5 12 2-8h6" stroke="#2f8fe0"/><path d="m4 13 5 0" stroke="#e8c23a"/><path d="m13 4 2 5h5" stroke="#8a58d8"/><path d="m20 9-3 9h-6" stroke="#e86a8a"/><path d="m11 18-2-5" stroke="#f08a4a"/></svg></button>
<button class="ti" aria-label="Explorer"><svg width="23" height="22"><path d="M1 2h8l2 3h11v16H1z" fill="#f5c145"/><path d="M1 8h21v13H1z" fill="#fbd468"/><path d="M5 15h13v6H5z" fill="#1a78c8"/></svg></button>
<button class="ti flex-column" aria-label="Edge"><svg width="24" height="24" viewBox="0 0 24 24"><circle cx="12" cy="11" r="11" fill="#1a86c8"/><path d="M1 11A11 11 0 0 1 23 9q0 5-6 5-4 0-3-4-5-5-13 1z" fill="#48c878"/><path d="M1 9Q4 0 12 0q6 0 9 5-4 4-8 5-5-3-12-1z" fill="#33b5d0"/><path d="M1 14h11v9H1z" fill="#b8682a"/><circle cx="15" cy="15" r="4" fill="#eaf6fb"/></svg><svg width="5" height="3" class="mt-1"><rect width="5" height="3" rx="1.500" fill="#888"/></svg></button>
<button class="ti" aria-label="Snip"><svg width="22" height="24" fill="none"><path d="M2 15V3h12v7" stroke="#c8443a" stroke-width="3" stroke-dasharray="2.500 1.500"/><path d="M5 12h11M11 5v12" stroke="#555" stroke-width="1.500"/><circle cx="18" cy="13" r="2.500" stroke="#1a86d0" stroke-width="2"/><circle cx="11" cy="20" r="2.500" stroke="#1a86d0" stroke-width="2"/></svg></button>
<button class="ti live flex-column rounded" aria-label="PrimeRx"><svg width="18" height="21" class="mt-2"><use href="#rx"/></svg><svg width="14" height="3"><rect width="14" height="3" rx="1.500" fill="#0a6fc4"/></svg></button>
</div>
<div class="clock ms-auto d-flex align-items-center">
<svg width="92" height="18" viewBox="0 0 92 18" fill="none" stroke="#222" class="me-3"><path d="m4 11 4.500-4L13 11" stroke-width="1.400"/><ellipse cx="38" cy="9" rx="7" ry="5" fill="#999"/><path d="m31 3 14 12" stroke-width="2"/><path d="M69 2h-9v11h11v-2M62 16h8M71 1h3v5h-3zM72.500 6v4"/><path d="M86 5l-3 1v4l4 3V4"/><circle cx="88" cy="12" r="4" fill="#222"/><path d="m86.500 10.500 3 3m0-3-3 3" stroke="#fff"/></svg>
<div class="text-end">2:22 AM<br>9/9/2025</div></div>
</div>

<section class="dlg d-flex flex-column" role="dialog" aria-label="Pharmacy Custom Reports">
<div class="dlg-title d-flex align-items-center"><span class="flex-fill">Pharmacy Custom Reports</span><svg width="92" height="12" viewBox="0 0 92 12" fill="none" stroke="#222"><path d="M0 6.500h8M41.500 2.500h7v8h-7zM83 2l8 8M91 2l-8 8"/></svg></div>
<div class="banner d-flex align-items-center"><span class="flex-fill">Pharmacy Custom Reports</span><svg width="15" height="13" viewBox="0 0 15 13"><path d="m1 6 5-4 8 3v4l-4 3-9-3z" fill="#e4e4e4" stroke="#777"/><path d="m4 6 6 3m-4-5 6 3M3 1l4 1" stroke="#888" fill="none"/></svg></div>
<fieldset class="params"><legend>Report Parameters:</legend>
<div class="selrow d-flex align-items-center"><label for="rep" class="selrep">Select Report:</label>
<div class="combo"><select id="rep"><option></option></select><svg class="chev" width="16" height="16"><path d="m4 6 4 4 4-4" fill="none" stroke="#666"/></svg>
<ul class="lst" role="listbox" aria-label="Reports"><li>Refill Request</li><li>McKesson Data Feed - Opiods : Pharmacy Customer Data</li><li>Rx Fax Report / Erx Report</li><li>DME Report</li><li>ERX Report</li><li>Receive Inventory Report</li><li>Prescriber report</li><li class="sel">Daily Rx Report</li></ul></div></div>
<div class="go text-end"><button class="wbtn t-blue"><u>S</u>earch</button></div>
</fieldset>
<div class="result">Search Result</div>
<div class="dlg-foot d-flex align-items-center"><label class="flex-fill d-flex align-items-center"><input type="checkbox" class="cbx">Enable Cell Padding</label><button class="wbtn">Export</button><button class="wbtn t-red"><u>C</u>lose</button></div>
<svg class="ms-auto mt-auto me-1" width="8" height="8"><path d="M6 0h2v2H6zM6 3h2v2H6zM3 3h2v2H3zM0 6h2v2H0zM3 6h2v2H3zM6 6h2v2H6z" fill="#bbb"/></svg>
</section>

<div class="alltech d-flex align-items-center"><i class="d-flex align-items-center justify-content-center"><svg width="6" height="10"><path d="m1 1 4 4-4 4" fill="none" stroke="#fff" stroke-width="1.500"/></svg></i><svg class="ms-2" width="14" height="13"><path d="M0 1h9v6H0z" fill="#eee"/><path d="M4.500 4.500h8v5h-8zM7 12h4" fill="#aaa" stroke="#eee"/></svg><span>AllTechMD</span></div>
<div class="wm">Activate Windows<small>Go to Settings to activate Windows.</small></div>
</div>
</main>
</body>
</html>
